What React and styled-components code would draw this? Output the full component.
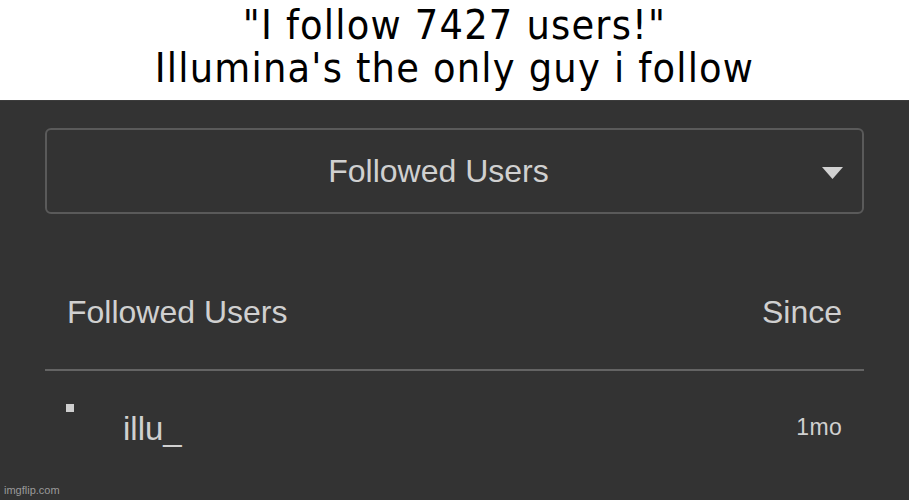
import React from "react"
import styled, { createGlobalStyle } from "styled-components"

const GlobalStyle = createGlobalStyle`
  html, body {
    margin: 0;
    padding: 0;
    background: #333333;
  }
  body {
    width: 909px;
    height: 500px;
    overflow: hidden;
  }
`

const Page = styled.div`
  width: 909px;
  height: 500px;
  display: flex;
  flex-direction: column;
`

const Caption = styled.div`
  height: 100px;
  background: #ffffff;
  color: #000000;
  font-family: "DejaVu Sans Condensed", "DejaVu Sans", sans-serif;
  font-stretch: condensed;
  font-size: 41px;
  line-height: 48px;
  letter-spacing: 1.2px;
  text-align: center;
  padding-top: 1px;
  box-sizing: border-box;
`

const CaptionLine = styled.div`
  height: 43px;
  line-height: 48px;
`

const Panel = styled.div`
  flex: 1;
  position: relative;
  background: #333333;
  border-top: 1px solid #3c3c3c;
  padding: 27px 45px 0;
  font-family: "Liberation Sans", Arial, sans-serif;
  color: #d0d0d0;
`

const Select = styled.div`
  height: 86px;
  box-sizing: border-box;
  border: 2px solid #5a5a5a;
  border-radius: 6px;
  display: flex;
  align-items: center;
  padding-right: 19px;
`

const SelectLabel = styled.div`
  flex: 1;
  text-align: center;
  padding-left: 8px;
  font-size: 32px;
`

const Arrow = styled.svg`
  width: 21px;
  height: 12px;
  margin-top: 4px;
`

const HeaderRow = styled.div`
  display: flex;
  justify-content: space-between;
  padding: 80px 22px 38px;
  font-size: 32px;
  line-height: 37px;
  border-bottom: 2px solid #646464;
`

const UserRow = styled.div`
  display: flex;
  align-items: flex-start;
  padding: 0 22px 0 21px;
`

const Bullet = styled.span`
  width: 8px;
  height: 8px;
  background: #cfcfcf;
  margin-top: 33px;
  flex: none;
`

const Name = styled.span`
  margin: ${(p) => p.$top}px 0 0 49px;
  font-size: 33px;
  line-height: 36px;
  flex: 1;
`

const Since = styled.span`
  margin-top: 43px;
  font-size: 23px;
  line-height: 26px;
  letter-spacing: 0.3px;
`

const Watermark = styled.div`
  position: absolute;
  left: 4px;
  bottom: 4px;
  font-size: 11px;
  color: #9a9a9a;
`

const App = () => {
  return (
    <React.Fragment>
      <GlobalStyle />
      <Page>
        <Caption>
          <CaptionLine>"I follow 7427 users!"</CaptionLine>
          <CaptionLine>Illumina's the only guy i follow</CaptionLine>
        </Caption>
        <Panel>
          <Select>
            <SelectLabel>Followed Users</SelectLabel>
            <Arrow viewBox="0 0 21 12">
              <polygon points="0,0 21,0 10.5,12" fill="#d2d2d2" />
            </Arrow>
          </Select>
          <HeaderRow>
            <span>Followed Users</span>
            <span>Since</span>
          </HeaderRow>
          <UserRow>
            <Bullet />
            <Name $top={40}>illu_</Name>
            <Since>1mo</Since>
          </UserRow>
          <Watermark>imgflip.com</Watermark>
        </Panel>
      </Page>
    </React.Fragment>
  )
}

export default App
